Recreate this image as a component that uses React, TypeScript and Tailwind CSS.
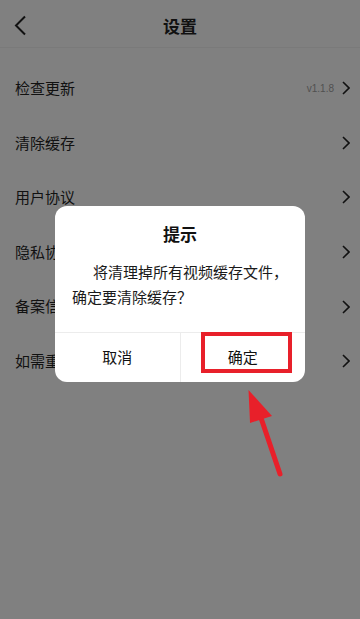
const rows = [
  { label: "检查更新", extra: "v1.1.8" },
  { label: "清除缓存" },
  { label: "用户协议" },
  { label: "隐私协议" },
  { label: "备案信息" },
  { label: "如需重置账号" },
];

function Chevron() {
  return (
    <svg width="8" height="14" viewBox="0 0 8 14" fill="none" stroke="#111" strokeWidth="1.6">
      <path d="M1 1 L7 7 L1 13" />
    </svg>
  );
}

export default function App() {
  return (
    <div
      className="relative h-[619px] w-[360px] overflow-hidden bg-[#808080] text-[#111]"
      style={{ fontFamily: '"Noto Sans CJK SC", "Noto Sans", sans-serif' }}
    >
      {/* header */}
      <div className="relative flex h-[48px] items-center justify-center border-b border-[#7a7a7a] pt-[4px]">
        <svg
          className="absolute left-[14px] top-[15px]"
          width="13"
          height="21"
          viewBox="0 0 13 21"
          fill="none"
          stroke="#111"
          strokeWidth="2"
        >
          <path d="M11 1.5 L2 10.5 L11 19.5" />
        </svg>
        <h1 className="text-[17px] font-bold leading-none">设置</h1>
      </div>

      {/* list */}
      <div className="pt-[13px]">
        {rows.map((r) => (
          <div key={r.label} className="flex h-[54.6px] items-center pl-[15px] pr-[10px]">
            <span className="flex-1 text-[15px]">{r.label}</span>
            {r.extra && (
              <span
                className="mr-[8px] text-[10px] text-[#505050]"
                style={{ fontFamily: '"Liberation Sans", Arial, sans-serif' }}
              >
                {r.extra}
              </span>
            )}
            <Chevron />
          </div>
        ))}
      </div>

      {/* dialog */}
      <div className="absolute left-[55px] top-[206px] w-[250px] overflow-hidden rounded-[12px] bg-white">
        <div className="pt-[16px] text-center text-[17px] font-bold leading-[24px]">提示</div>
        <p className="whitespace-nowrap px-[17px] pb-[23px] pt-[13px] text-[15px] leading-[25px] text-[#1a1a1a]">
          <span className="pl-[21px]">将清理掉所有视频缓存文件，</span>
          <br />
          确定要清除缓存？
        </p>
        <div className="flex h-[50px] border-t border-[#ececec] text-[15px]">
          <div className="flex flex-1 items-center justify-center border-r border-[#ececec]">取消</div>
          <div className="flex flex-1 items-center justify-center">确定</div>
        </div>
      </div>

      {/* highlight box */}
      <div className="absolute left-[201px] top-[332px] h-[41px] w-[91px] border-[4px] border-[#e8202a]" />

      {/* arrow */}
      <svg className="absolute left-[240px] top-[385px]" width="50" height="95" viewBox="0 0 50 95">
        <path d="M40 89 L20 30" stroke="#e8202a" strokeWidth="5" strokeLinecap="round" />
        <path d="M8.5 5 L10 38 L32 31 Z" fill="#e8202a" />
      </svg>
    </div>
  );
}
